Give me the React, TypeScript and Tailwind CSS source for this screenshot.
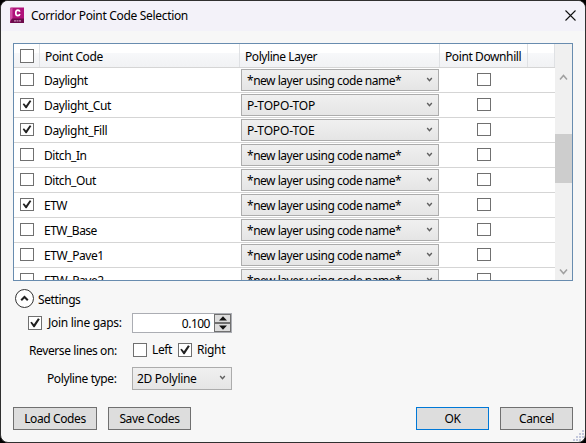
import React from "react";

type Row = { code: string; checked?: boolean; layer?: string; tracking: string };

const rows: Row[] = [
  { code: "Daylight", tracking: "tracking-[-0.4px]" },
  { code: "Daylight_Cut", checked: true, layer: "P-TOPO-TOP", tracking: "tracking-[-0.38px]" },
  { code: "Daylight_Fill", checked: true, layer: "P-TOPO-TOE", tracking: "tracking-[-0.34px]" },
  { code: "Ditch_In", tracking: "tracking-[-0.45px]" },
  { code: "Ditch_Out", tracking: "tracking-[-0.45px]" },
  { code: "ETW", checked: true, tracking: "tracking-[-0.5px]" },
  { code: "ETW_Base", tracking: "tracking-[-0.5px]" },
  { code: "ETW_Pave1", tracking: "tracking-[-0.42px]" },
  { code: "ETW_Pave2", tracking: "tracking-[-0.42px]" },
];

function Check({ checked = false, tall = false }: { checked?: boolean; tall?: boolean }) {
  return (
    <span
      className={`block w-[14px] shrink-0 border border-[#707070] bg-white ${tall ? "h-[14px]" : "h-[13px]"}`}
    >
      {checked && (
        <svg viewBox="0 0 12 12" className={`block w-[12px] ${tall ? "h-[12px]" : "h-[11px]"}`}>
          <path d="M1.3 5.6 2.7 4.7 4.9 7.2 9 1.300 10.800 2.200 5.600 10.200 4.500 10.200z" fill="#212121" />
        </svg>
      )}
    </span>
  );
}

function Chevron() {
  return (
    <svg viewBox="0 0 7 6" className="h-[6px] w-[7px] shrink-0">
      <path d="M1.200 1 3.500 3.700 5.800 1" fill="none" stroke="#606060" strokeWidth="1.400" />
    </svg>
  );
}

function LayerSelect({ layer }: { layer?: string }) {
  return (
    <div className="flex h-[22px] w-[198px] shrink-0 justify-between border border-[#acacac] bg-linear-to-b from-[#f0f0f0] to-[#e5e5e5] pr-[5px] pl-[5px]">
      <span className={`leading-[22px] ${layer ? "tracking-[-0.15px]" : "tracking-[-0.48px]"}`}>
        {layer ?? "*new layer using code name*"}
      </span>
      <span className="pt-[7px]">
        <Chevron />
      </span>
    </div>
  );
}

function PointTable() {
  return (
    <div className="mx-[12px] mt-[12px] flex h-[238px] w-[560px] overflow-hidden border border-[#688caf] bg-white">
      <div className="w-[541px] shrink-0 overflow-hidden">
        <div className="flex h-[24px] border-b border-[#d5d5d5] bg-[linear-gradient(#fff_0%,#fff_40%,#f7f8fa_41%,#f1f2f4_100%)] leading-[26px]">
          <div className="w-[26px] shrink-0 border-r border-[#dfe1e4] pt-[5px] pl-[6px]">
            <Check tall />
          </div>
          <div className="w-[200px] shrink-0 border-r border-[#dfe1e4] pl-[5px] tracking-[-0.35px]">Point Code</div>
          <div className="w-[200px] shrink-0 border-r border-[#dfe1e4] pl-[5px] tracking-[-0.43px]">Polyline Layer</div>
          <div className="w-[88px] shrink-0 border-r border-[#dfe1e4] pl-[5px] tracking-[-0.4px]">Point Downhill</div>
          <div className="w-[27px] shrink-0 border-r border-[#dfe1e4]" />
        </div>
        {rows.map((r) => (
          <div key={r.code} className="flex h-[25px] border-b border-[#d5d5d5]">
            <div className="w-[30px] shrink-0 pt-[5px] pl-[6px]">
              <Check checked={r.checked} />
            </div>
            <div className={`w-[197px] shrink-0 leading-[26px] ${r.tracking}`}>{r.code}</div>
            <div className="pt-px">
              <LayerSelect layer={r.layer} />
            </div>
            <div className="pt-[5px] pl-[38px]">
              <Check />
            </div>
          </div>
        ))}
      </div>
      <div className="flex w-[17px] shrink-0 flex-col items-center bg-[#f0f0f0]">
        <svg viewBox="0 0 9 7" className="mt-[30px] h-[7px] w-[9px] shrink-0">
          <path d="M1 5.5 4.5 1.5 8 5.5" fill="none" stroke="#a0a0a0" strokeWidth="1.5" />
        </svg>
        <div className="mt-[53px] h-[49px] w-full shrink-0 bg-[#cdcdcd]" />
        <svg viewBox="0 0 9 7" className="mt-[85px] h-[7px] w-[9px] shrink-0">
          <path d="M1 1.5 4.5 5.5 8 1.5" fill="none" stroke="#a0a0a0" strokeWidth="1.5" />
        </svg>
      </div>
    </div>
  );
}

function PushButton({ label, className }: { label: string; className: string }) {
  return (
    <button className={`block h-[23px] shrink-0 border bg-[#dddddd] text-center leading-[22px] ${className}`}>
      {label}
    </button>
  );
}

function SpinButton({ d }: { d: string }) {
  return (
    <span className="flex h-[9px] w-[17px] items-center justify-center border border-[#707070] bg-[#dddddd]">
      <svg viewBox="0 0 10 5" className="h-[5px] w-[10px]">
        <path d={d} fill="#111" />
      </svg>
    </span>
  );
}

export default function App() {
  return (
    <div className="h-[443px] w-[586px] overflow-hidden bg-black font-['Noto_Sans','Open_Sans',sans-serif] text-[12px] whitespace-nowrap text-black">
      <div className="flex h-[443px] w-[586px] flex-col overflow-hidden rounded-[8px] border border-[#303030] bg-[#f7f7f7]">
        <div className="flex h-[30px] shrink-0 bg-[#f3f2f9]">
          <svg viewBox="0 0 16 17" className="mt-[6px] ml-[8px] h-[17px] w-[16px] shrink-0">
            <path d="M1.500 .5h13.500v15.500H1V2.500z" fill="#b0127b" />
            <path d="M1 2.500 3.500 .5v11L1 15z" fill="#d052a6" />
            <path d="M3 11.500h12v4.500H1.500V14z" fill="#6c0b4c" />
            <path d="M10.800 4.700C10.500 3.700 9.800 3.200 8.900 3.200 7.600 3.200 6.800 4.200 6.800 5.900s.8 2.700 2.100 2.700c1 0 1.700-.6 2-1.600" fill="none" stroke="#fff" strokeWidth="1.700" />
            <path d="M5 13.800h7" stroke="#c489b3" strokeWidth="1.300" strokeDasharray="2 .5" />
          </svg>
          <span className="ml-[6px] leading-[30px] tracking-[-0.32px]">Corridor Point Code Selection</span>
          <svg viewBox="0 0 11 11" className="mt-[9px] mr-[9px] ml-auto h-[11px] w-[11px]">
            <path d="M.5 .5l10 10M10.500 .5l-10 10" stroke="#111" strokeWidth="1.100" />
          </svg>
        </div>

        <PointTable />

        <div className="mt-[8px] ml-[14px] flex h-[20px] shrink-0">
          <svg viewBox="0 0 20 20" className="h-[20px] w-[20px]">
            <circle cx="9.500" cy="9.500" r="9" fill="#fff" stroke="#333" />
            <path d="M6.200 11.300 9.500 8l3.300 3.300" fill="none" stroke="#222" strokeWidth="2" />
          </svg>
          <span className="ml-[3px] leading-[22px] tracking-[-0.4px]">Settings</span>
        </div>

        <div className="mt-[4px] flex h-[20px] shrink-0">
          <div className="flex w-[131px] pt-[3px] pl-[27px]">
            <Check checked tall />
            <span className="ml-[6px] leading-[14px] tracking-[-0.3px]">Join line gaps:</span>
          </div>
          <div className="flex h-[20px] w-[100px] border border-[#abadb3] bg-white">
            <span className="w-[77px] text-right leading-[20px] tracking-[-0.5px]">0.100</span>
            <div className="ml-[4px] flex flex-col">
              <SpinButton d="M5 .3 9 4.500H1z" />
              <SpinButton d="M5 4.700 9 .5H1z" />
            </div>
          </div>
        </div>

        <div className="mt-[10px] flex h-[14px] shrink-0">
          <span className="w-[132px] pl-[28px] leading-[16px] tracking-[-0.4px]">Reverse lines on:</span>
          <Check tall />
          <span className="w-[31px] pl-[5px] leading-[14px] tracking-[-0.4px]">Left</span>
          <Check checked tall />
          <span className="pl-[5px] leading-[14px] tracking-[-0.3px]">Right</span>
        </div>

        <div className="mt-[10px] flex h-[23px] shrink-0">
          <span className="w-[131px] pl-[46px] leading-[24px] tracking-[-0.4px]">Polyline type:</span>
          <div className="flex h-[23px] w-[100px] justify-between border border-[#acacac] bg-linear-to-b from-[#f0f0f0] to-[#e5e5e5] pr-[5px] pl-[4px]">
            <span className="leading-[22px] tracking-[-0.3px]">2D Polyline</span>
            <span className="pt-[7px]">
              <Chevron />
            </span>
          </div>
        </div>

        <div className="mt-[17px] flex h-[35px] shrink-0 pl-[12px]">
          <PushButton label="Load Codes" className="w-[84px] border-[#707070] tracking-[-0.38px]" />
          <PushButton label="Save Codes" className="ml-[11px] w-[83px] border-[#707070] tracking-[-0.38px]" />
          <PushButton label="OK" className="ml-[225px] w-[73px] border-[#0078d7] tracking-[-0.5px]" />
          <PushButton label="Cancel" className="ml-[11px] w-[73px] border-[#707070] tracking-[-0.38px]" />
          <svg viewBox="0 0 12 12" className="ml-auto h-[12px] w-[12px] shrink-0 self-end">
            <path
              d="M9 0h2v2H9zM6 3h2v2H6zM9 3h2v2H9zM3 6h2v2H3zM6 6h2v2H6zM9 6h2v2H9zM0 9h2v2H0zM3 9h2v2H3zM6 9h2v2H6z"
              fill="#c3c8dc"
            />
          </svg>
        </div>
      </div>
    </div>
  );
}
